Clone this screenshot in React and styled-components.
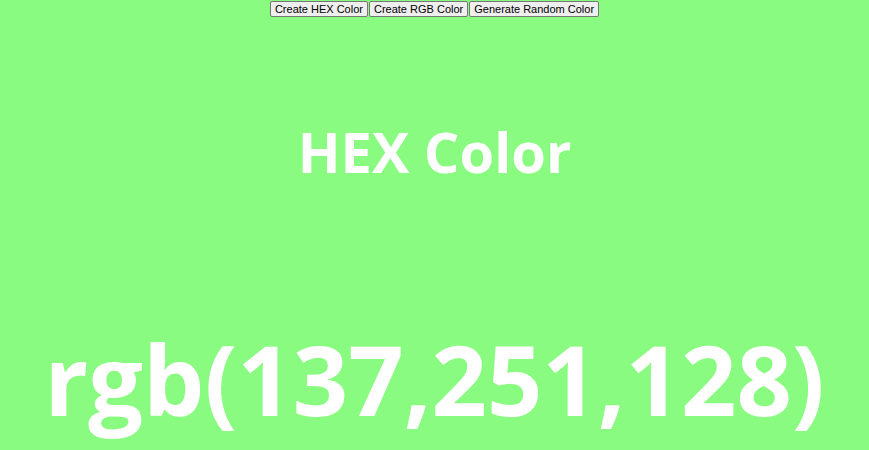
import React from "react";
import styled, { createGlobalStyle } from "styled-components";

const Global = createGlobalStyle`
  html, body { margin: 0; padding: 0; }
  body { background: rgb(137, 251, 128); overflow: hidden; }
`;

const Page = styled.div`
  height: 450px;
  display: flex;
  flex-direction: column;
  align-items: center;
  background: rgb(137, 251, 128);
`;

const Toolbar = styled.div`
  display: flex;
  gap: 1px;
  padding-top: 1px;
`;

const Button = styled.button`
  font-family: "Liberation Sans", Arial, sans-serif;
  font-size: 11px;
  height: 16px;
  padding: 0 4px;
  line-height: 14px;
  color: #000;
  background: #efefef;
  border: 1px solid #767676;
  border-radius: 2px;
`;

const Title = styled.h1`
  margin: 106px 0 0;
  font-family: "Open Sans", "Noto Sans", sans-serif;
  font-weight: 700;
  font-size: 56px;
  line-height: 1;
  color: #fff;
`;

const Value = styled.div`
  margin-top: 151px;
  font-family: "Open Sans", "Noto Sans", sans-serif;
  font-weight: 700;
  font-size: 97px;
  line-height: 1;
  color: #fff;
  white-space: nowrap;
`;

export default function App() {
  return (
    <>
      <Global />
      <Page>
        <Toolbar>
          <Button>Create HEX Color</Button>
          <Button>Create RGB Color</Button>
          <Button>Generate Random Color</Button>
        </Toolbar>
        <Title>HEX Color</Title>
        <Value>rgb(137,251,128)</Value>
      </Page>
    </>
  );
}
